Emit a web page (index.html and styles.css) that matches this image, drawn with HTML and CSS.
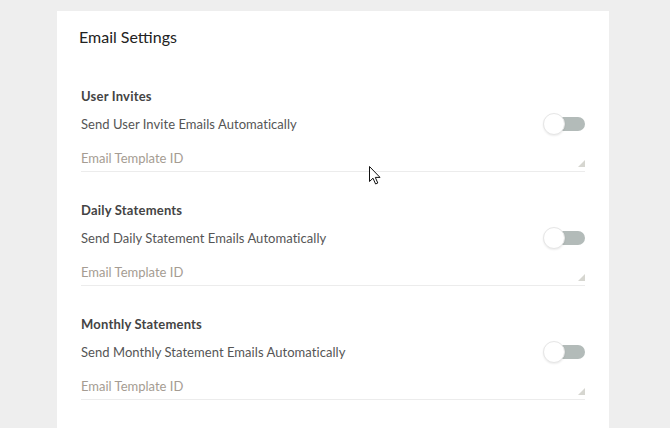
FILE: index.html
```html
<!DOCTYPE html>
<html lang="en">
<head>
    <meta charset="UTF-8">
    <title>Email Settings</title>
    <link rel="stylesheet" href="styles.css">
</head>
<body>
    <div class="card">
        <h2 class="card-title">Email Settings</h2>

        <!-- user invites -->
        <div class="section">
            <div class="section-title">User Invites</div>
            <div class="toggle-row">
                <span>Send User Invite Emails Automatically</span>
                <div class="toggle"><span class="knob"></span></div>
            </div>
            <div class="field">
                <textarea rows="1" placeholder="Email Template ID"></textarea>
            </div>
        </div>

        <!-- daily statements -->
        <div class="section">
            <div class="section-title">Daily Statements</div>
            <div class="toggle-row">
                <span>Send Daily Statement Emails Automatically</span>
                <div class="toggle"><span class="knob"></span></div>
            </div>
            <div class="field">
                <textarea rows="1" placeholder="Email Template ID"></textarea>
            </div>
        </div>

        <!-- monthly statements -->
        <div class="section">
            <div class="section-title">Monthly Statements</div>
            <div class="toggle-row">
                <span>Send Monthly Statement Emails Automatically</span>
                <div class="toggle"><span class="knob"></span></div>
            </div>
            <div class="field">
                <textarea rows="1" placeholder="Email Template ID"></textarea>
            </div>
        </div>
    </div>

    <!-- mouse pointer -->
    <svg class="cursor" width="13" height="19" viewBox="0 0 13 19">
        <path d="M0.5 0.5 L0.5 15.5 L4 12.2 L6.6 18 L8.8 17 L6.3 11.4 L11 11.4 Z" fill="#fff" stroke="#111" stroke-width="1"/>
    </svg>
</body>
</html>
```

FILE: styles.css
```css
* {
    box-sizing: border-box;
}

body {
    margin: 0;
    background: #eeeeee;
    font-family: 'Lato', sans-serif;
    height: 428px;
    overflow: hidden;
    position: relative;
}

.card {
    margin: 11px 0 0 57px;
    width: 552px;
    min-height: 417px;
    background: #fff;
    padding: 16px 24px 0 24px;
}

.card-title {
    margin: 0 0 0 -2px;
    font-size: 16px;
    line-height: 20px;
    font-weight: 400;
    color: #222;
}

.section {
    margin-top: 29px;
}

.section:first-of-type {
    margin-top: 40px;
}

.section-title {
    font-size: 13px;
    line-height: 18px;
    font-weight: 700;
    letter-spacing: 0.2px;
    color: #444;
}

.toggle-row {
    display: flex;
    align-items: center;
    justify-content: space-between;
    height: 24px;
    margin-top: 7px;
    font-size: 13px;
    letter-spacing: 0.05px;
    color: #555;
}

.toggle {
    position: relative;
    width: 42px;
    height: 24px;
    display: flex;
    align-items: center;
    justify-content: flex-end;
}

.toggle::before {
    content: "";
    width: 30px;
    height: 14px;
    border-radius: 7px;
    background: #b3bbb9;
}

.knob {
    position: absolute;
    left: 0;
    top: 1px;
    width: 22px;
    height: 22px;
    border-radius: 50%;
    background: #fff;
    border: 1px solid #e6e6e6;
    box-shadow: 0 1px 2px rgba(0, 0, 0, 0.08);
}

.field {
    position: relative;
    padding-top: 13px;
    border-bottom: 1px solid #ececec;
}

.field::after {
    content: "";
    position: absolute;
    right: 0;
    bottom: 4px;
    width: 0;
    height: 0;
    border-left: 7px solid transparent;
    border-bottom: 7px solid #d6d6d0;
}

.field textarea {
    display: block;
    width: 100%;
    height: 22px;
    border: none;
    outline: none;
    resize: none;
    padding: 0 0 4px 0;
    font-family: inherit;
    font-size: 13px;
    line-height: 18px;
    color: #555;
    background: transparent;
    overflow: hidden;
}

.field textarea::placeholder {
    color: #a59c92;
}

.cursor {
    position: absolute;
    left: 369px;
    top: 166px;
}
```
